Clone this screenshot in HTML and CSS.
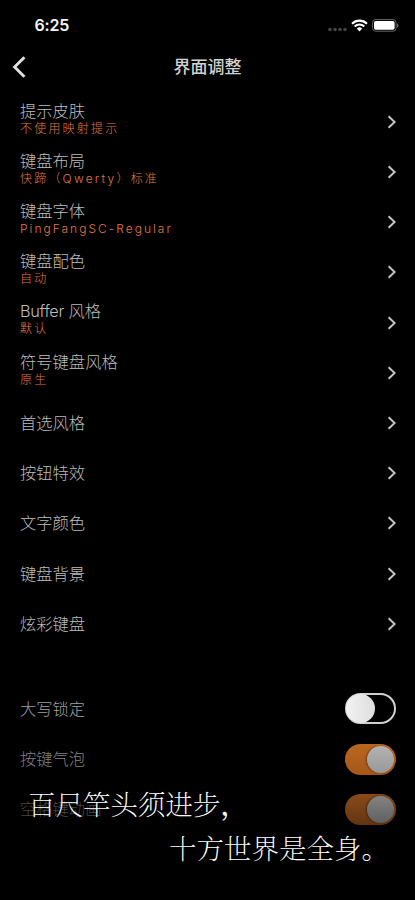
FILE: index.html
```html
<!DOCTYPE html>
<html lang="zh-CN">
<head>
<meta charset="utf-8">
<title>界面调整</title>
<link rel="stylesheet" href="styles.css">
</head>
<body>
<svg class="defs" width="0" height="0"><symbol id="chevron" viewBox="0 0 10 14"><path d="M1.6 1.2 7.6 7 1.6 12.8" fill="none" stroke="currentColor" stroke-width="2"/></symbol></svg>
<main class="screen">
  <div class="status">
    <span class="time">6:25</span>
    <div class="indicators">
      <svg width="19" height="5" viewBox="0 0 19 5" fill="#454545"><circle cx="2" cy="2.5" r="1.8"/><circle cx="7" cy="2.5" r="1.8"/><circle cx="12" cy="2.5" r="1.8"/><circle cx="17" cy="2.5" r="1.8"/></svg>
      <svg class="wifi" width="17" height="13" viewBox="0 0 17 13"><g fill="none" stroke="#fff" stroke-width="2.1"><path d="M1 4.7a10.7 10.7 0 0 1 15 0"/><path d="M3.7 7.5a6.8 6.8 0 0 1 9.6 0"/></g><path d="M5.8 9.6a3.9 3.9 0 0 1 5.4 0L8.5 12.4Z" fill="#fff"/></svg>
      <svg class="battery" width="27" height="13" viewBox="0 0 27 13"><rect x=".6" y=".6" width="23.4" height="11.6" rx="3" fill="none" stroke="#686868"/><rect x="2" y="2" width="20.6" height="8.8" rx="1.7" fill="#fff"/><path d="M25 4.3q1.6.7 1.6 2.1T25 8.5Z" fill="#686868"/></svg>
    </div>
  </div>
  <header class="nav">
    <svg class="back" width="14" height="22" viewBox="0 0 14 22"><path d="M12.4 1.2 2.6 11 12.4 20.8" fill="none" stroke="#e0e0e0" stroke-width="2.9"/></svg>
    <h1>界面调整</h1>
  </header>
  <section class="list">
    <div class="row"><div class="label"><b>提示皮肤</b><small>不使用映射提示</small></div><svg class="chev"><use href="#chevron"/></svg></div>
    <div class="row"><div class="label"><b>键盘布局</b><small>快蹄（Qwerty）标准</small></div><svg class="chev"><use href="#chevron"/></svg></div>
    <div class="row"><div class="label"><b>键盘字体</b><small class="latin">PingFangSC-Regular</small></div><svg class="chev"><use href="#chevron"/></svg></div>
    <div class="row"><div class="label"><b>键盘配色</b><small>自动</small></div><svg class="chev"><use href="#chevron"/></svg></div>
    <div class="row"><div class="label"><b><span class="word">Buffer</span> 风格</b><small>默认</small></div><svg class="chev"><use href="#chevron"/></svg></div>
    <div class="row"><div class="label"><b>符号键盘风格</b><small>原生</small></div><svg class="chev"><use href="#chevron"/></svg></div>
    <div class="row"><b>首选风格</b><svg class="chev"><use href="#chevron"/></svg></div>
    <div class="row"><b>按钮特效</b><svg class="chev"><use href="#chevron"/></svg></div>
    <div class="row"><b>文字颜色</b><svg class="chev"><use href="#chevron"/></svg></div>
    <div class="row"><b>键盘背景</b><svg class="chev"><use href="#chevron"/></svg></div>
    <div class="row"><b>炫彩键盘</b><svg class="chev"><use href="#chevron"/></svg></div>
  </section>
  <section class="list switches">
    <div class="row caps"><b>大写锁定</b><span class="switch off"><i></i></span></div>
    <div class="row bubble"><b>按键气泡</b><span class="switch on"><i></i></span></div>
    <div class="row space"><b>空格键动画</b><span class="switch on"><i></i></span></div>
  </section>
  <div class="verse"><p>百尺竿头须进步<span class="comma">，</span></p><p class="second">十方世界是全身。</p></div>
</main>
</body>
</html>
```
FILE: styles.css
```css
* { box-sizing: border-box; }
body { margin: 0; background: #000; font-family: Inter, "Noto Sans CJK SC", sans-serif; }
.defs { position: absolute; }
.screen { position: relative; width: 415px; height: 900px; overflow: hidden; background: #000; color: #bcbcbc; }
.status { height: 50px; padding: 0 16px 0 34.5px; display: flex; align-items: center; justify-content: space-between; }
.time { color: #f4f4f4; font-size: 16px; font-weight: 600; line-height: 20px; letter-spacing: -.15px; }
.indicators { display: flex; align-items: center; }
.indicators svg:first-child { margin-top: 8px; }
.wifi { margin-left: 4px; }
.battery { margin-left: 4px; }
.nav { height: 33px; display: grid; grid-template-columns: 32px 1fr 32px; align-items: center; }
.back { margin-left: 12px; }
h1 { margin: 0; font-size: 17px; font-weight: 500; line-height: 24px; text-align: center; color: #d2d2d2; }
.list { padding: 13.8px 18px 0 20px; }
.row { height: 50.2px; display: flex; align-items: center; justify-content: space-between; }
.row b { display: block; font-size: 16.3px; font-weight: 300; line-height: 20px; }
.row .word { letter-spacing: -.3px; }
.label { padding-bottom: 3.4px; }
.label b { line-height: 17px; }
.label small { display: block; font-size: 12px; line-height: 18px; letter-spacing: 2.2px; font-weight: 300; color: #e07840; }
.label .latin { letter-spacing: 2.02px; }
.chev { width: 10px; height: 14px; color: #c4c4c4; }
.switches { padding: 35px 19px 0 20px; }
.switch { width: 51.5px; height: 31px; border-radius: 16px; display: flex; align-items: center; }
.switch i { display: block; border-radius: 50%; }
.off { border: 2px solid #d0d0d0; }
.off i { width: 29px; height: 29px; margin-left: -1px; flex: none; background: linear-gradient(90deg, #f2f2f2, #dedede); }
.on { justify-content: flex-end; padding-right: 2px; background: linear-gradient(#ba681f, #a4571a); }
.on i { width: 27px; height: 27px; background: linear-gradient(#b2b2b2, #999); box-shadow: -1px 0 2px #693b15; }
.caps b { color: #a0a0a0; }
.bubble b { color: #808080; }
.space b { color: #484848; }
.space .on { background: linear-gradient(#8a4b17, #633411); }
.space .on i { background: linear-gradient(#838383, #606060); box-shadow: -1px 0 2px #442411; }
.verse { position: absolute; left: 28px; top: 781px; width: 387px; color: #fff; font: 200 27.5px/44px "Noto Serif CJK SC", "Noto Sans CJK SC", serif; white-space: nowrap; }
.verse p { margin: 0; }
.verse .comma { font-weight: 500; }
.verse .second { padding-left: 141px; }
```
